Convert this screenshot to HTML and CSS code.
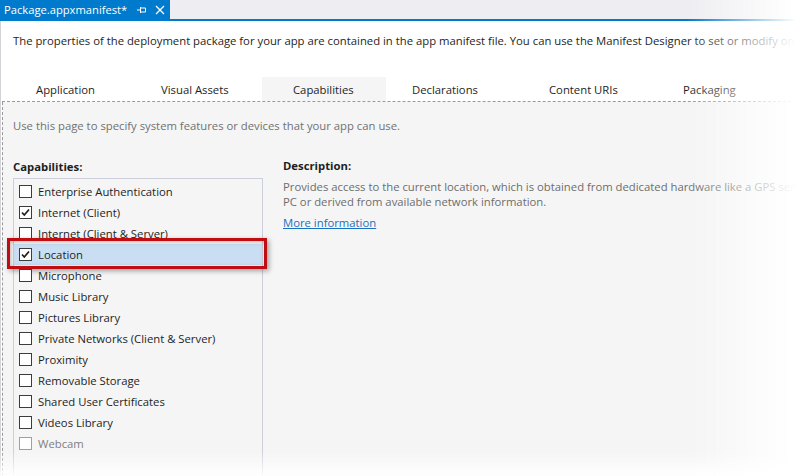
FILE: index.html
```html
<!DOCTYPE html>
<html>
<head>
<meta charset="utf-8">
<link rel="stylesheet" href="styles.css">
</head>
<body>
<div class="doc-bar">
  <div class="doc-tab">
    <span class="doc-title">Package.appxmanifest*</span>
    <svg class="pin" width="10" height="8" viewBox="0 0 10 8"><path d="M0 4H3M3.5 1V7M3.5 2H8.5V6H3.5" fill="none" stroke="#fff" stroke-width="1"/></svg>
    <svg class="close" width="10" height="10" viewBox="0 0 10 10"><path d="M1 1L9 9M9 1L1 9" stroke="#fff" stroke-width="1.3"/></svg>
  </div>
</div>
<div class="page">
  <p class="intro">The properties of the deployment package for your app are contained in the app manifest file. You can use the Manifest Designer to set or modify one</p>
  <div class="tabs">
    <div class="tab t1">Application</div>
    <div class="tab t2">Visual Assets</div>
    <div class="tab t3 active">Capabilities</div>
    <div class="tab t4">Declarations</div>
    <div class="tab t5">Content URIs</div>
    <div class="tab t6">Packaging</div>
  </div>
  <div class="content">
    <p class="hint">Use this page to specify system features or devices that your app can use.</p>
    <div class="columns">
      <div class="left">
        <h3 class="label">Capabilities:</h3>
        <div class="listbox">
          <div class="row"><span class="cb"></span>Enterprise Authentication</div>
          <div class="row"><span class="cb"><svg width="11" height="11" viewBox="0 0 11 11"><path d="M2 5.5L4.3 8L9 2.5" fill="none" stroke="#1e1e1e" stroke-width="1.7"/></svg></span>Internet (Client)</div>
          <div class="row"><span class="cb"></span>Internet (Client &amp; Server)</div>
          <div class="row selected"><span class="cb"><svg width="11" height="11" viewBox="0 0 11 11"><path d="M2 5.5L4.3 8L9 2.5" fill="none" stroke="#1e1e1e" stroke-width="1.7"/></svg></span>Location<span class="callout"></span></div>
          <div class="row"><span class="cb"></span>Microphone</div>
          <div class="row"><span class="cb"></span>Music Library</div>
          <div class="row"><span class="cb"></span>Pictures Library</div>
          <div class="row"><span class="cb"></span>Private Networks (Client &amp; Server)</div>
          <div class="row"><span class="cb"></span>Proximity</div>
          <div class="row"><span class="cb"></span>Removable Storage</div>
          <div class="row"><span class="cb"></span>Shared User Certificates</div>
          <div class="row"><span class="cb"></span>Videos Library</div>
          <div class="row disabled"><span class="cb"></span>Webcam</div>
        </div>
      </div>
      <div class="right">
        <h3 class="label">Description:</h3>
        <p class="desc">Provides access to the current location, which is obtained from dedicated hardware like a GPS sensor in the PC or derived from available network information.</p>
        <a class="more" href="#">More information</a>
      </div>
    </div>
  </div>
</div>
<div class="fade-right"></div>
<div class="fade-bottom"></div>
</body>
</html>
```
FILE: styles.css
```css
html, body {
  margin: 0;
  padding: 0;
  width: 806px;
  height: 476px;
  overflow: hidden;
  background: #fff;
  font-family: "Open Sans", "Noto Sans", sans-serif;
  font-size: 11.3px;
  color: #1e1e1e;
}
.doc-bar {
  height: 19px;
  background: #eeeef2;
  border-bottom: 2px solid #007acc;
  display: flex;
}
.doc-tab {
  width: 170px;
  background: #007acc;
  color: #fff;
  display: flex;
  align-items: center;
  padding-left: 4px;
  box-sizing: border-box;
  font-size: 11.2px;
  line-height: 19px;
}
.doc-title { width: 133px; white-space: nowrap; overflow: hidden; }
.pin { margin-right: 8px; flex: none; }
.close { flex: none; }
.page {
  border-left: 1px solid #d4d4d8;
  height: 455px;
  overflow: hidden;
  display: flex;
  flex-direction: column;
}
.page > * { flex-shrink: 0; }
.intro {
  margin: 0;
  padding: 12px 0 0 12px;
  line-height: 16px;
  white-space: nowrap;
  color: #1e1e1e;
  height: 44px;
}
.tabs {
  display: flex;
  margin-left: 1px;
  height: 24px;
  border-bottom: 1px dashed #9a9a9a;
}
.tab {
  line-height: 25px;
  white-space: nowrap;
  box-sizing: border-box;
  color: #1e1e1e;
}
.t1 { width: 127px; padding-left: 34px; }
.t2 { width: 133px; padding-left: 32px; }
.t3 { width: 124px; padding-left: 31px; }
.t4 { width: 130px; padding-left: 26px; }
.t5 { width: 134px; padding-left: 33px; }
.t6 { flex: 1; padding-left: 33px; }
.tab.active { background: #f5f5f5; }
.content {
  flex: 1 0 auto;
  margin-left: 1px;
  border-left: 1px dashed #9a9a9a;
  background: #f5f5f5;
  padding-left: 10px;
}
.hint {
  margin: 0;
  padding-top: 16px;
  line-height: 16px;
  color: #717171;
  white-space: nowrap;
}
.columns {
  display: flex;
  gap: 20px;
  margin-top: 25px;
}
.left { width: 250px; flex: none; }
.right { flex: 1; min-width: 0; margin-top: -1px; }
.label {
  margin: 0;
  font-size: 11.3px;
  font-weight: 700;
  line-height: 16px;
  color: #1e1e1e;
}
.listbox {
  margin-top: 3px;
  border: 1px solid #cccedb;
  border-bottom: none;
  padding-top: 2px;
  height: 300px;
}
.row {
  position: relative;
  height: 21px;
  display: flex;
  align-items: center;
  padding-left: 5px;
  white-space: nowrap;
  color: #1e1e1e;
}
.cb {
  width: 13px;
  height: 13px;
  box-sizing: border-box;
  border: 1px solid #3c3c3c;
  background: #fff;
  margin-right: 6px;
  display: flex;
  align-items: center;
  justify-content: center;
}
.row.selected { background: #cadef3; }
.row.disabled { color: #808080; }
.row.disabled .cb { border-color: #a0a0a0; }
.callout {
  position: absolute;
  left: -7px;
  top: -6px;
  right: -5px;
  bottom: -4px;
  border: 3px solid #bf0d12;
  box-shadow: 2px 2px 5px rgba(0,0,0,0.35), inset 1px 1px 4px rgba(0,0,0,0.25);
  pointer-events: none;
}
.desc {
  margin: 5px 0 0 0;
  line-height: 15px;
  color: #6d6d6d;
  width: 580px;
}
.more {
  display: inline-block;
  margin-top: 6px;
  line-height: 15px;
  color: #1a6fbf;
  text-decoration: underline;
}
.fade-right {
  position: fixed;
  top: 0;
  right: 0;
  width: 120px;
  height: 476px;
  background: linear-gradient(to right, rgba(255,255,255,0), #fff 92%);
  pointer-events: none;
}
.fade-bottom {
  position: fixed;
  left: 0;
  bottom: 0;
  width: 806px;
  height: 26px;
  background: linear-gradient(to bottom, rgba(255,255,255,0), rgba(255,255,255,0.9));
  pointer-events: none;
}
```
